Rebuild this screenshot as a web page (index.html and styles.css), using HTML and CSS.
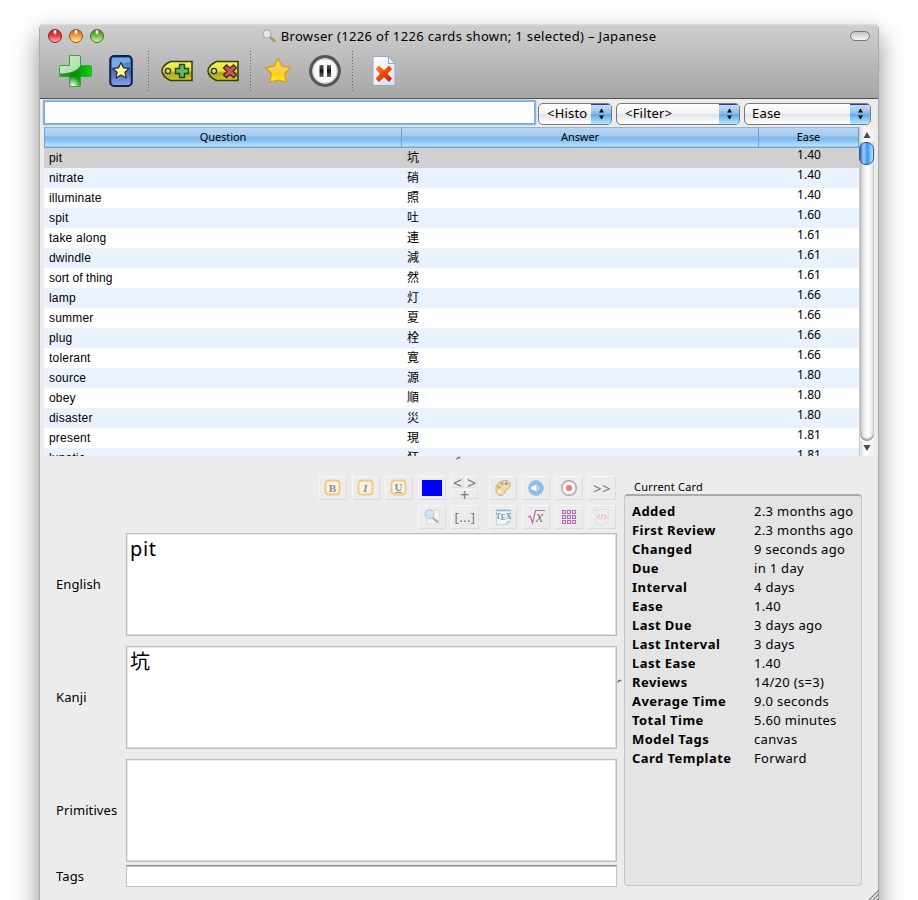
FILE: index.html
```html
<!DOCTYPE html>
<html lang="en">
<head>
<meta charset="utf-8">
<title>Browser – Japanese</title>
<link rel="stylesheet" href="styles.css">
</head>
<body>
<svg class="defs" width="0" height="0">
  <defs>
    <linearGradient id="green" x1="0" y1="0" x2="1" y2="1"><stop offset="0" stop-color="#d4efd0"/><stop offset="1" stop-color="#a5dba0"/></linearGradient>
    <linearGradient id="deep" x1="0" y1="0" x2="1" y2="0"><stop offset="0" stop-color="#2f9a2f"/><stop offset=".5" stop-color="#0a8f0a"/><stop offset="1" stop-color="#08d808"/></linearGradient>
    <radialGradient id="glow" cx=".3" cy="1" r=".8"><stop offset="0" stop-color="#fff"/><stop offset="1" stop-color="#fff" stop-opacity="0"/></radialGradient>
    <linearGradient id="blue" x1="0" y1="0" x2="0" y2="1"><stop offset="0" stop-color="#2f78c8"/><stop offset=".4" stop-color="#4f8ed8"/><stop offset=".5" stop-color="#4e68b8"/><stop offset="1" stop-color="#8b9ff0"/></linearGradient>
    <linearGradient id="tag" x1="0" y1="0" x2="0" y2="1"><stop offset="0" stop-color="#f8f45c"/><stop offset=".5" stop-color="#e4df3c"/><stop offset=".6" stop-color="#a9a41c"/><stop offset="1" stop-color="#d0c92e"/></linearGradient>
    <linearGradient id="gold" x1="0" y1="0" x2="0" y2="1"><stop offset="0" stop-color="#ffe13e"/><stop offset=".55" stop-color="#fbcb50"/><stop offset=".65" stop-color="#fbd200"/><stop offset="1" stop-color="#ffea2c"/></linearGradient>
    <linearGradient id="bar" x1="0" y1="0" x2="0" y2="1"><stop offset="0" stop-color="#666"/><stop offset=".5" stop-color="#111"/><stop offset="1" stop-color="#666"/></linearGradient>
    <linearGradient id="page" x1="0" y1="0" x2="1" y2="1"><stop offset="0" stop-color="#fff"/><stop offset="1" stop-color="#d5def2"/></linearGradient>
    <linearGradient id="red" x1="0" y1="0" x2="1" y2="1"><stop offset="0" stop-color="#ff8a3d"/><stop offset=".5" stop-color="#f04800"/><stop offset="1" stop-color="#c81c00"/></linearGradient>
  </defs>
</svg>
<div class="window">
  <header class="titlebar">
    <div class="caption">
      <div class="lights"><i class="light close"></i><i class="light minimize"></i><i class="light expand"></i></div>
      <div class="title">
        <svg width="14" height="14" viewBox="0 0 14 14"><path d="M8 8l4.500 4" stroke="#b9934f" stroke-width="2.400" stroke-linecap="round"/><circle cx="5" cy="5" r="4" fill="#dfe9ee" stroke="#a9abad" stroke-width="1.200"/></svg>
        <span>Browser (1226 of 1226 cards shown; 1 selected) – Japanese</span>
      </div>
      <i class="pill"></i>
    </div>
    <div class="toolbar">
      <svg class="plus" width="34" height="34" viewBox="0 0 34 34"><path id="cross" d="M12.500 1.500h9q1 0 1 1v9h10q1 0 1 1v9q0 1-1 1h-10v9q0 1-1 1h-9q-1 0-1-1v-9h-9q-1 0-1-1v-9q0-1 1-1h9v-9q0-1 1-1z" fill="url(#deep)"/><path d="M12.500 1.500h9q1 0 1 1v9Q19 17 11.500 18.500 7 19.500 1.500 19.500v-7q0-1 1-1h9v-9q0-1 1-1z" fill="url(#green)"/><path d="M12 20h10v12H12z" fill="url(#glow)"/><path d="M12.500 1.500h9q1 0 1 1v9h10q1 0 1 1v9q0 1-1 1h-10v9q0 1-1 1h-9q-1 0-1-1v-9h-9q-1 0-1-1v-9q0-1 1-1h9v-9q0-1 1-1z" fill="none" stroke="#3a9e3a"/></svg>
      <svg class="card" width="24" height="34" viewBox="0 0 24 34"><rect x="1.200" y="2" width="21.600" height="30" rx="4" fill="url(#blue)" stroke="#15223d" stroke-width="2"/><path d="M3 4h18v4Q12 9 3 15z" fill="#a7d0f4" opacity=".5"/><path d="M12 8.500l2.400 5.300 5.800.6-4.300 3.900 1.200 5.700-5.100-2.900-5.100 2.900 1.200-5.700-4.300-3.900 5.800-.6z" fill="#ffff9d" stroke="#272a29" stroke-width="1.200" stroke-linejoin="round"/></svg>
      <i class="divider d1"></i>
      <svg class="tag1" width="32" height="22" viewBox="0 0 32 22"><path d="M9.500 1.500h21.500v19h-21.500C4 18 1 15 1 11s3-7 8.500-9.500z" fill="url(#tag)" stroke="#383a12" stroke-width="1.500"/><circle cx="7" cy="11" r="2.600" fill="#d2d2c8" stroke="#383a12" stroke-width="1.400"/><path d="M18.500 4.500h5v4h4v5h-4v4h-5v-4h-4v-5h4z" fill="#6cb65b" stroke="#1e4426" stroke-width="1.400"/></svg>
      <svg class="tag2" width="32" height="22" viewBox="0 0 32 22"><path d="M9.500 1.500h21.500v19h-21.500C4 18 1 15 1 11s3-7 8.500-9.500z" fill="url(#tag)" stroke="#383a12" stroke-width="1.500"/><circle cx="7" cy="11" r="2.600" fill="#d2d2c8" stroke="#383a12" stroke-width="1.400"/><path d="M16.500 8l3-3 3.500 3 3.500-3 3 3-3.500 3.300 3.500 3.500-3 2.800-3.500-3-3.500 3-3-2.800 3.500-3.500z" fill="#c05a5a" stroke="#5d1c1c" stroke-width="1.300"/></svg>
      <i class="divider d2"></i>
      <svg class="star" width="28" height="28" viewBox="0 0 28 28"><path d="M14 1.500l3.900 7.700 8.900 1.300-6 6 1.400 8.700-8.200-2-8.200 2 1.400-8.700-6-6 8.900-1.300z" fill="url(#gold)" stroke="#d39c23" stroke-width="1.300" stroke-linejoin="round"/></svg>
      <svg class="pause" width="32" height="32" viewBox="0 0 32 32"><circle cx="16" cy="16" r="14.300" fill="#fafafa" stroke="#555" stroke-width="3.200"/><circle cx="16" cy="16" r="12" fill="none" stroke="#d0d0d0"/><path d="M10.500 10h4v12h-4zM18 10h4v12h-4z" fill="url(#bar)"/></svg>
      <i class="divider d3"></i>
      <svg class="delete" width="26" height="32" viewBox="0 0 26 32"><path d="M2 1.500h15.500l6.500 7v22H2z" fill="url(#page)" stroke="#9ba9cc"/><path d="M17.500 1.500v7H24z" fill="#edf2fd" stroke="#93a3c8"/><path d="M4.500 14l3.500-3.500 5 4.700 5-4.700L21 14l-4.500 4.800L21 23.500 18 27l-5-4.700L8 27l-3.500-3.500L9 18.800z" fill="url(#red)"/></svg>
    </div>
  </header>

  <div class="search">
    <div class="query"></div>
    <div class="select history"><span>&lt;Histo</span><i><svg width="9" height="14" viewBox="0 0 9 14"><path d="M4.500 1.500L7 5.500H2zM4.500 12.500L7 8.500H2z"/></svg></i></div>
    <div class="select filter"><span>&lt;Filter&gt;</span><i><svg width="9" height="14" viewBox="0 0 9 14"><path d="M4.500 1.500L7 5.500H2zM4.500 12.500L7 8.500H2z"/></svg></i></div>
    <div class="select sort"><span>Ease</span><i><svg width="9" height="14" viewBox="0 0 9 14"><path d="M4.500 1.500L7 5.500H2zM4.500 12.500L7 8.500H2z"/></svg></i></div>
  </div>

  <div class="listing">
    <div class="grid">
      <div class="row head"><b>Question</b><b>Answer</b><b>Ease</b></div>
      <div class="row selected"><span>pit</span><span>坑</span><em>1.40</em></div>
      <div class="row"><span>nitrate</span><span>硝</span><em>1.40</em></div>
      <div class="row"><span>illuminate</span><span>照</span><em>1.40</em></div>
      <div class="row"><span>spit</span><span>吐</span><em>1.60</em></div>
      <div class="row"><span>take along</span><span>連</span><em>1.61</em></div>
      <div class="row"><span>dwindle</span><span>減</span><em>1.61</em></div>
      <div class="row"><span class="tight">sort of thing</span><span>然</span><em>1.61</em></div>
      <div class="row"><span>lamp</span><span>灯</span><em>1.66</em></div>
      <div class="row"><span>summer</span><span>夏</span><em>1.66</em></div>
      <div class="row"><span>plug</span><span>栓</span><em>1.66</em></div>
      <div class="row"><span>tolerant</span><span>寛</span><em>1.66</em></div>
      <div class="row"><span>source</span><span>源</span><em>1.80</em></div>
      <div class="row"><span>obey</span><span>順</span><em>1.80</em></div>
      <div class="row"><span>disaster</span><span>災</span><em>1.80</em></div>
      <div class="row"><span>present</span><span>現</span><em>1.81</em></div>
      <div class="row"><span>lunatic</span><span>狂</span><em>1.81</em></div>
    </div>
    <div class="scroll">
      <svg class="arrow" width="14" height="15" viewBox="0 0 14 15"><path d="M7 5l3.500 6h-7z" fill="#4b4b4b"/></svg>
      <div class="track"><div class="thumb"></div></div>
      <svg class="arrow" width="14" height="15" viewBox="0 0 14 15"><path d="M7 10l3.500-6h-7z" fill="#4b4b4b"/></svg>
    </div>
  </div>
  <div class="splitter"><svg width="6" height="4" viewBox="0 0 6 4"><path d="M1 3.500Q1 1 4.500 1.500" fill="none" stroke="#777" stroke-width="1.500"/></svg></div>

  <div class="lower">
    <div class="editor">
      <div class="buttons">
        <div class="tool-row">
          <div class="btn"><svg width="18" height="18" viewBox="0 0 18 18"><rect class="fmt" x="1.500" y="1.500" width="14" height="14" rx="3"/><text x="8.500" y="12.500">B</text></svg></div>
          <div class="btn"><svg width="18" height="18" viewBox="0 0 18 18"><rect class="fmt" x="1.500" y="1.500" width="14" height="14" rx="3"/><text x="8.500" y="12.500" class="it">I</text></svg></div>
          <div class="btn"><svg width="18" height="18" viewBox="0 0 18 18"><rect class="fmt" x="1.500" y="1.500" width="14" height="14" rx="3"/><text x="8.500" y="11.500">U</text><path d="M5 13.500h7" stroke="#999"/></svg></div>
          <div class="btn"><i class="swatch"></i></div>
          <div class="minis"><span>&lt;</span><span>&gt;</span><span class="wide">+</span></div>
          <div class="btn gap"><svg width="18" height="18" viewBox="0 0 18 18"><path d="M2 11C1 5 7 1 12 1.500c5 .5 5 5 3 7.500-1 1.500-3 1-3.500 2.500-.4 1.500-1.500 4.500-4.500 5C4 17 2.500 14 2 11z" fill="#f3d8a4" stroke="#cfab7c"/><circle cx="5" cy="8" r="1.500" fill="#ee8b86"/><circle cx="8" cy="4.500" r="1.500" fill="#83c878"/><circle cx="12.500" cy="4.500" r="1.600" fill="#779fe0"/><circle cx="5.500" cy="12.500" r="1.500" fill="#fff"/></svg></div>
          <div class="btn"><svg width="18" height="18" viewBox="0 0 18 18"><circle cx="9" cy="9" r="7.500" fill="#8fbbe2" stroke="#a7c8e5"/><path d="M4.500 7.300h2.200L9.500 5v8l-2.800-2.300H4.500z" fill="#fff"/><path d="M11 6.500q2 2.500 0 5" stroke="#e6f2fc" fill="none"/></svg></div>
          <div class="btn"><svg width="18" height="18" viewBox="0 0 18 18"><circle cx="9" cy="9" r="7.300" fill="#f7f7f7" stroke="#a6a6a6" stroke-width="1.400"/><circle cx="9" cy="9" r="3" fill="#ea7c7c"/></svg></div>
          <div class="btn more">&gt;&gt;</div>
        </div>
        <div class="tool-row">
          <div class="btn"><svg width="18" height="18" viewBox="0 0 18 18"><path d="M4 2h12v14H4z" fill="#f4f4f4" stroke="#ddd"/><path d="M9.500 9.500l5.500 5" stroke="#a4a8b3" stroke-width="2"/><circle cx="6.500" cy="6" r="4.500" fill="#c9e8f5" stroke="#b5c3cc"/></svg></div>
          <div class="btn cloze">[...]</div>
          <div class="btn gap"><svg width="18" height="18" viewBox="0 0 18 18"><path d="M2.500 2h14v11.500L13.500 16.500H2.500z" fill="#f4f7fb" stroke="#cbd3de"/><path d="M2.500 2.500h14" stroke="#8caee5" stroke-width="1.500"/><text x="9.500" y="10.500" class="tex">T<tspan dy="1">E</tspan><tspan dy="-1">X</tspan></text><path d="M13 16.500v-3h3.500" fill="#ddd" stroke="#c5c5c5"/></svg></div>
          <div class="btn"><svg width="19" height="18" viewBox="0 0 19 18"><path d="M1 9l2-1 2.500 7L8.500 2.500H18" fill="none" stroke="#b868b8" stroke-width="1.200"/><text x="12.500" y="13.500" class="root">x</text></svg></div>
          <div class="btn"><svg width="16" height="16" viewBox="0 0 16 16" fill="#f5e8f5" stroke="#b868b8" stroke-width="1.100"><path d="M1.500 1.500h3v3h-3zM6.500 1.500h3v3h-3zM11.500 1.500h3v3h-3zM1.500 6.500h3v3h-3zM6.500 6.500h3v3h-3zM11.500 6.500h3v3h-3zM1.500 11.500h3v3h-3zM6.500 11.500h3v3h-3zM11.500 11.500h3v3h-3z"/></svg></div>
          <div class="btn"><svg width="18" height="18" viewBox="0 0 18 18"><path d="M3 1.500h12v11L11.500 16.500H3z" fill="#f1eeee" stroke="#dedede"/><path d="M7 6.500L4.500 9 7 11M11 6.500L13.500 9 11 11M9.800 6L8 11.500" fill="none" stroke="#f1bcc6" stroke-width="1.200"/></svg></div>
        </div>
      </div>
      <div class="fields">
        <label>English</label><div class="area">pit</div>
        <label>Kanji</label><div class="area">坑</div>
        <label>Primitives</label><div class="area"></div>
        <label>Tags</label><div class="tags"></div>
      </div>
    </div>
    <div class="vsplit"><svg width="6" height="4" viewBox="0 0 6 4"><path d="M1 3.500Q1 1 4.500 1.500" fill="none" stroke="#777" stroke-width="1.500"/></svg></div>
    <aside class="info">
      <h2>Current Card</h2>
      <dl>
        <dt>Added</dt><dd>2.3 months ago</dd>
        <dt>First Review</dt><dd>2.3 months ago</dd>
        <dt>Changed</dt><dd>9 seconds ago</dd>
        <dt>Due</dt><dd>in 1 day</dd>
        <dt>Interval</dt><dd>4 days</dd>
        <dt>Ease</dt><dd>1.40</dd>
        <dt>Last Due</dt><dd>3 days ago</dd>
        <dt>Last Interval</dt><dd>3 days</dd>
        <dt>Last Ease</dt><dd>1.40</dd>
        <dt>Reviews</dt><dd>14/20 (s=3)</dd>
        <dt>Average Time</dt><dd>9.0 seconds</dd>
        <dt>Total Time</dt><dd>5.60 minutes</dd>
        <dt>Model Tags</dt><dd>canvas</dd>
        <dt>Card Template</dt><dd>Forward</dd>
      </dl>
    </aside>
  </div>
  <svg class="grip" width="11" height="11" viewBox="0 0 11 11"><path d="M0 11L11 0M4 11l7-7M8 11l3-3" stroke="#777" stroke-width="1.100"/></svg>
</div>
</body>
</html>
```
FILE: styles.css
```css
* { box-sizing: border-box; }
html, body { height: 900px; margin: 0; overflow: hidden; background: #fff; }
body { padding: 24px 39px 0; font: 13px/19px "Noto Sans", "Noto Sans CJK JP", sans-serif; color: #000; }
.defs { position: absolute; }
svg { display: block; flex: none; }
i, em { font-style: normal; }

.window { position: relative; height: 930px; width: 840px; border: 1px solid #a9a9a9; border-top: 0; border-radius: 5px 5px 0 0; background: #ececec; box-shadow: 0 11px 26px rgba(0,0,0,.45); }

.titlebar { height: 75px; border-bottom: 1px solid #4e4e4e; border-radius: 5px 5px 0 0; background: linear-gradient(#e0e0e0 0, #cecece 2px, #a6a6a6 100%); }
.caption { display: flex; align-items: center; justify-content: space-between; height: 24px; padding: 0 8px; }
.lights { display: flex; gap: 7px; width: 56px; }
.light { width: 14px; height: 14px; border-radius: 50%; border: 1px solid; }
.close { border-color: #7f2423; background: radial-gradient(ellipse at 50% 15%, #fff 0 8%, transparent 22%), linear-gradient(#b3282c, #ee3f45 50%, #ffb4b4); }
.minimize { border-color: #955321; background: radial-gradient(ellipse at 50% 15%, #fff 0 8%, transparent 22%), linear-gradient(#c4631f, #f3a043 50%, #ffee93); }
.expand { border-color: #45702b; background: radial-gradient(ellipse at 50% 15%, #fff 0 8%, transparent 22%), linear-gradient(#44812d, #7dbb55 50%, #cdf59b); }
.title { display: flex; align-items: center; gap: 5px; white-space: nowrap; }
.title span { letter-spacing: .34px; }
.pill { width: 20px; height: 10px; margin-left: 36px; border: 1px solid #777; border-radius: 5px; background: linear-gradient(#c4c4c4, #f5f5f5); }
.toolbar { display: flex; align-items: center; height: 46px; padding-left: 18px; }
.card { margin-left: 17px; }
.divider { width: 1px; height: 40px; background: repeating-linear-gradient(#666 0 1px, transparent 1px 3px); }
.d1 { margin-left: 15px; }
.tag1 { margin-left: 12px; }
.tag2 { margin-left: 14px; }
.d2 { margin-left: 11px; }
.star { margin-left: 13px; }
.pause { margin-left: 17px; }
.d3 { margin-left: 11px; }
.delete { margin-left: 18px; }

.search { display: flex; height: 28px; padding: 2px 0 0 4px; }
.query { width: 489px; height: 21px; margin: 1px 0 0 1px; background: #fff; box-shadow: 0 0 0 1px #7fabdc, 0 0 0 2px #8db5e0, 0 0 2px 2px #9fc1e6; }
.select { display: flex; justify-content: space-between; height: 22px; margin: 2px 0 0 4px; border: 1px solid #777; border-radius: 5px; background: linear-gradient(#fff, #f2f2f2 48%, #e4e4e4 52%, #fff); line-height: 19px; letter-spacing: .2px; overflow: hidden; }
.select span { padding-left: 8px; white-space: nowrap; }
.select i { display: grid; place-items: center; width: 20px; padding-bottom: 2px; border-top: 1px solid #34349a; background: linear-gradient(#c6dff7, #8dbcf0 45%, #64a8ea 50%, #b1eaff); }
.history { width: 74px; }
.filter { width: 124px; }
.sort { width: 127px; }
.sort span { padding-left: 7px; }

.listing { display: flex; height: 329px; padding-left: 4px; overflow: hidden; }
.grid { width: 815px; }
.row { display: grid; grid-template-columns: 358px 357px 100px; height: 20px; background: #fff; font: 12px/20px "Liberation Sans", "Noto Sans CJK JP", sans-serif; }
.row:nth-child(odd) { background: #eaf2ff; }
.row.selected { background: #d0d0d0; }
.row span { padding-left: 5px; white-space: nowrap; letter-spacing: .2px; }
.row em { text-align: center; font: 12px/13px "Noto Sans", sans-serif; }
.row .tight { letter-spacing: .05px; }
.row.head { height: 21px; background: linear-gradient(#8fb3dc 0 1px, #b7d6f4 1px, #a2cbf0 9px, #80b9eb 10px, #83bdee 13px, #b9e5ff 19px, #76a5d8 20px); }
.row.head b { border-right: 1px solid #719fd8; text-align: center; font: 11px/20px "Noto Sans", sans-serif; letter-spacing: -.1px; }
.row.head b:first-child { border-left: 1px solid #719fd8; }
.scroll { display: flex; flex-direction: column; width: 15px; background: #fff; border-left: 1px solid #ccc; }
.arrow { background: linear-gradient(90deg, #ddd, #fff 40%, #eee); }
.track { flex: 1; border-radius: 0 0 8px 8px; background: linear-gradient(90deg, #c4c4c4, #f2f2f2 35%, #fff 60%, #ddd); box-shadow: inset 0 -2px 2px #999; }
.thumb { height: 23px; margin-left: -1px; border: 1px solid #2c5598; border-radius: 7px; background: linear-gradient(90deg, #2467c3, #a8d0f8 30%, #5da6ef 45%, #429af0 60%, #b9eeff); }

.splitter { display: flex; justify-content: center; height: 7px; }
.lower { display: flex; height: 430px; }
.editor { width: 577px; padding-top: 13px; }
.buttons { display: flex; flex-direction: column; gap: 5px; align-items: flex-end; padding-right: 1px; }
.tool-row { display: flex; gap: 5px; height: 24px; }
.btn { display: grid; place-items: center; width: 28px; height: 24px; border: 1px solid #f7f7f7; border-right-color: #dedede; border-bottom-color: #dadada; color: #777; }
.more { font-size: 15px; letter-spacing: .5px; }
.cloze { letter-spacing: .4px; }
.tool-row .gap { margin-left: 5px; }
.fmt { fill: #f5f3e7; stroke: #f0ca79; stroke-width: 1.8; }
.btn text { font: bold 11px "Liberation Serif", serif; fill: #8d8d8d; text-anchor: middle; }
.btn text.it { font-style: italic; }
.btn text.tex { font-size: 7.500px; fill: #708dbb; }
.btn text.root { font: italic 16px "Liberation Serif", serif; fill: #777; }
.swatch { width: 20px; height: 16px; background: #00f; }
.minis { display: grid; grid-template: 12px 10px / 13px 13px; gap: 1px 1px; width: 28px; font-size: 16px; line-height: 13px; text-align: center; color: #777; }
.minis span { border: 1px solid #f6f6f6; border-bottom-color: #dedede; border-right-color: #dedede; }
.minis .wide { grid-column: 1 / 3; line-height: 10px; }
.fields { display: grid; grid-template: 103px 103px 103px 22px / 70px 491px; row-gap: 10px; align-items: center; margin: 4px 0 0 16px; letter-spacing: .1px; }
.area { height: 103px; padding: 2px 3px; border: 1px solid #bdbdbd; box-shadow: inset -1px -1px #dedede, inset 1px 1px #ececec; background: #fff; font-size: 20px; line-height: 26px; letter-spacing: .6px; }
.tags { height: 22px; margin-top: -14px; border: 1px solid #c2c2c2; border-top-color: #858585; box-shadow: inset 0 1px #c8c8c8; background: #fff; }
.fields label:nth-of-type(4) { margin-top: -14px; }
.vsplit { display: flex; align-items: center; width: 7px; padding-top: 5px; }
.info { width: 238px; padding-top: 14px; }
.info h2 { margin: 0; padding-left: 10px; font: 11px/19px "Noto Sans", sans-serif; letter-spacing: .2px; height: 17px; }
.info dl { display: grid; grid-template-columns: 122px 1fr; grid-auto-rows: 19px; align-content: start; height: 392px; margin: 0; padding: 6px 0 0 7px; border: 1px solid #c6c6c6; border-top: 2px solid #aaa; border-radius: 4px; background: #e4e4e4; white-space: nowrap; }
.info dt { font-weight: bold; letter-spacing: .45px; }
.info dd { margin: 0; letter-spacing: .3px; }
.grip { position: absolute; left: 828px; top: 866px; }
```
